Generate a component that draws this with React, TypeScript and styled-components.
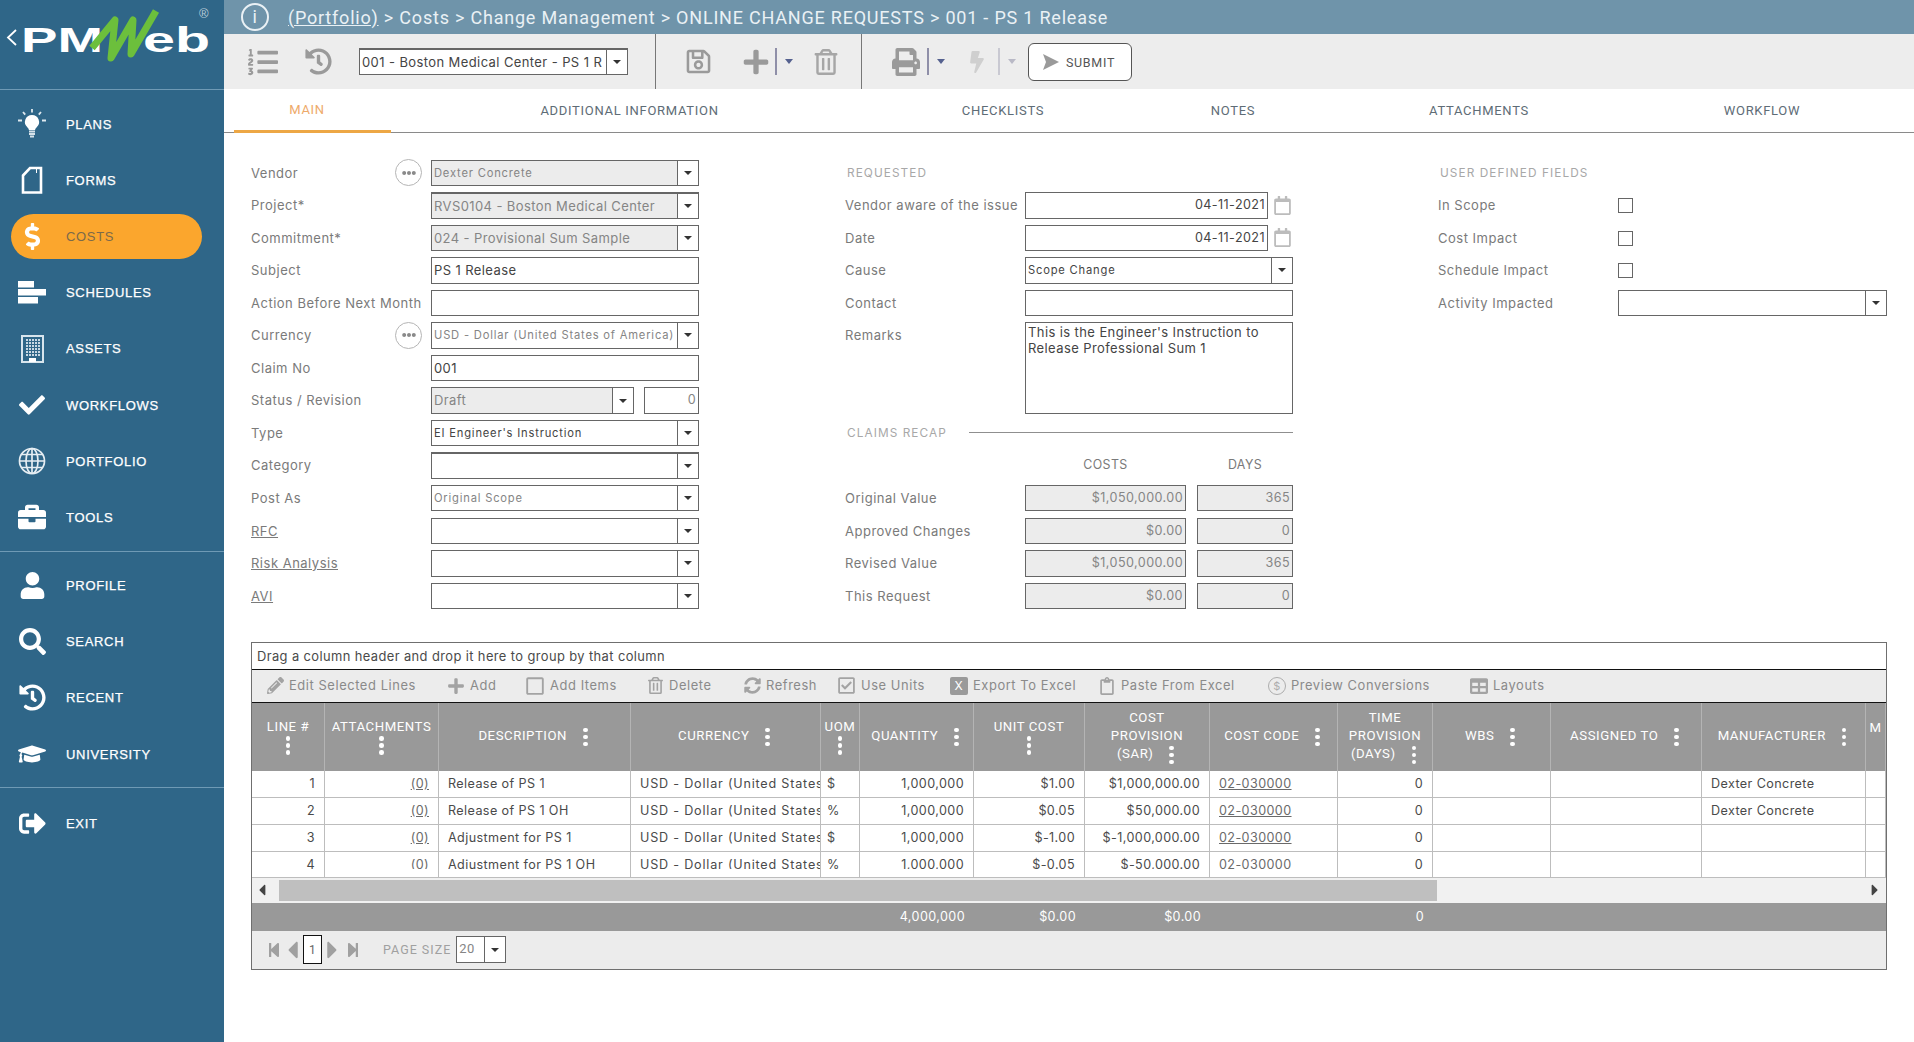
import React from "react";
import styled, {createGlobalStyle} from "styled-components";
import {
	FaBolt, FaBriefcase, FaCaretLeft, FaCaretRight, FaCheck, FaDollarSign, FaEllipsisH, FaGraduationCap, FaHistory,
	FaListOl, FaPencilAlt, FaPlus, FaPrint, FaRegCalendar, FaRegCheckSquare, FaRegClipboard, FaRegSave, FaRegSquare,
	FaRegTrashAlt, FaSearch, FaSignOutAlt, FaStepBackward, FaStepForward, FaSyncAlt, FaTable, FaUser
} from "react-icons/fa";

const GlobalStyle = createGlobalStyle`
	html, body {
		margin: 0;
		padding: 0;
		background: #ffffff;
	}
	* {
		box-sizing: border-box;
	}
`
const Page = styled.div`
	display: flex;
	width: 1914px;
	height: 1042px;
	overflow: hidden;
	font-family: "Inter", "Liberation Sans", sans-serif;
`

/* sidebar */
const Sidebar = styled.aside`
	flex: 0 0 224px;
	background: #2f6688;
	color: #ffffff;
	font-family: "Liberation Sans", sans-serif;
`
const LogoBox = styled.div`
	height: 90px;
	border-bottom: 1px solid #6f9ab5;
`
const NavGroup = styled.nav<{$last?: boolean}>`
	padding: ${props => props.$last ? 7 : 6}px 0 5px;
	border-bottom: ${props => props.$last ? "none" : "1px solid #6f9ab5"};
`
const NavItem = styled.div<{$active?: boolean}>`
	position: relative;
	display: flex;
	align-items: center;
	height: 56.2px;
	padding-left: 18px;
	font-size: 13px;
	letter-spacing: 0.68px;
	-webkit-text-stroke: 0.25px ${props => props.$active ? "transparent" : "#ffffff"};
	color: ${props => props.$active ? "#7b6a4a" : "#ffffff"};
	z-index: 0;

	&::before {
		content: "";
		display: ${props => props.$active ? "block" : "none"};
		position: absolute;
		left: 11px;
		top: 6px;
		width: 191px;
		height: 45px;
		border-radius: 23px;
		background: #fba62d;
		z-index: -1;
	}
`
const NavIcon = styled.span`
	display: flex;
	align-items: center;
	justify-content: center;
	width: 28px;
	height: 30px;
	margin-right: 20px;
	color: #ffffff;
	-webkit-text-stroke: 0;
`

const PlansIcon = () => (
	<svg width="28" height="30" viewBox="0 0 28 30">
		<path d="M14 6a7 7 0 0 1 4.5 12.4c-1 .9-1.3 1.8-1.4 2.6h-6.2c-.1-.8-.4-1.7-1.4-2.6A7 7 0 0 1 14 6z" fill="#fff"/>
		<path d="M11 22.5h6M11 25h6M12 27.5h4" stroke="#d6e2ea" strokeWidth="1.8"/>
		<path d="M14 0v3.5M5 3l2.2 2.6M23 3l-2.2 2.6M0 11.500h4M24 11.500h4" stroke="#dfe9ef" strokeWidth="1.8"/>
	</svg>
)
const FormsIcon = () => (
	<svg width="22" height="28" viewBox="0 0 22 28">
		<path d="M2 9.500 9 2h11v24.500H2z" fill="none" stroke="#fff" strokeWidth="2.600"/>
		<path d="M15.500 2v5" stroke="#fff" strokeWidth="1"/>
	</svg>
)
const SchedulesIcon = () => (
	<svg width="28" height="24" viewBox="0 0 28 24">
		<rect x="0" y="0" width="16" height="6.500" fill="#fff"/>
		<rect x="0" y="8" width="28" height="6.500" fill="#fff"/>
		<rect x="0" y="16" width="20" height="6.500" fill="#fff"/>
	</svg>
)
const AssetsIcon = () => {
	const windows = []
	for (let r = 0; r < 6; r++) {
		for (let c = 0; c < 5; c++) {
			windows.push(<rect key={`${r}-${c}`} x={5 + c * 3} y={4 + r * 3} width="2" height="2" fill="#c7d8e3"/>)
		}
	}
	return (
		<svg width="23" height="28" viewBox="0 0 23 28">
			<rect x="1" y="1" width="21" height="26" fill="#2f6688" stroke="#d8e5ed" strokeWidth="2"/>
			{windows}
			<rect x="8" y="23" width="7" height="4" fill="#fff"/>
		</svg>
	)
}
const GlobeIcon = () => (
	<svg width="28" height="28" viewBox="0 0 28 28" fill="none" stroke="#e6eef3" strokeWidth="1.700">
		<circle cx="14" cy="14" r="12.500"/>
		<ellipse cx="14" cy="14" rx="6" ry="12.500"/>
		<path d="M14 1.500v25M1.500 14h25M3.500 7.500h21M3.500 20.500h21"/>
	</svg>
)

const navTop = [
	{label: "PLANS", icon: <PlansIcon/>},
	{label: "FORMS", icon: <FormsIcon/>},
	{label: "COSTS", icon: <FaDollarSign size={27}/>, active: true},
	{label: "SCHEDULES", icon: <SchedulesIcon/>},
	{label: "ASSETS", icon: <AssetsIcon/>},
	{label: "WORKFLOWS", icon: <FaCheck size={26}/>},
	{label: "PORTFOLIO", icon: <GlobeIcon/>},
	{label: "TOOLS", icon: <FaBriefcase size={28}/>},
]
const navMiddle = [
	{label: "PROFILE", icon: <FaUser size={27}/>},
	{label: "SEARCH", icon: <FaSearch size={27}/>},
	{label: "RECENT", icon: <FaHistory size={27}/>},
	{label: "UNIVERSITY", icon: <FaGraduationCap size={28}/>},
]

const Logo = () => (
	<svg width="224" height="89" viewBox="0 0 224 89">
		<path d="M16 30 8 37.500l8 7.500" fill="none" stroke="#ffffff" strokeWidth="1.800"/>
		<text x="21" y="52" fontFamily="Liberation Sans" fontWeight="700" fontSize="35" fill="#ffffff" textLength="82" lengthAdjust="spacingAndGlyphs">PM</text>
		<text x="143" y="52" fontFamily="Liberation Sans" fontWeight="700" fontSize="35" fill="#ffffff" textLength="67" lengthAdjust="spacingAndGlyphs">eb</text>
		<path d="M92 48 115 20 111 58 133 20 131 54 156 11" fill="none" stroke="#6cbf3c" strokeWidth="7" strokeLinejoin="round"/>
		<text x="199" y="18" fontFamily="Liberation Sans" fontSize="13" fill="#b9ccd8">®</text>
	</svg>
)

/* top bars */
const Main = styled.main`
	flex: 1;
	min-width: 0;
	display: flex;
	flex-direction: column;
`
const Breadcrumb = styled.header`
	display: flex;
	align-items: center;
	height: 34px;
	padding-left: 17px;
	background: #6f94aa;
	color: #eaf1f5;
	font-family: "Roboto", sans-serif;
	font-size: 18px;
	letter-spacing: 0.79px;
	white-space: pre;
`
const InfoBadge = styled.span`
	display: flex;
	align-items: center;
	justify-content: center;
	width: 28px;
	height: 28px;
	margin-right: 19px;
	border: 2.5px solid #eaf1f5;
	border-radius: 50%;
	font-size: 18px;
	line-height: 1;
`
const CrumbLink = styled.span`
	text-decoration: underline;
`
const Toolbar = styled.div`
	display: flex;
	align-items: center;
	height: 55px;
	padding-left: 24px;
	background: #ededed;
`
const ToolIcon = styled.span<{$ml: number; $color?: string}>`
	display: flex;
	align-items: center;
	margin-left: ${props => props.$ml}px;
	color: ${props => props.$color || "#9a9a9a"};
`
const ToolSep = styled.span<{$ml: number}>`
	align-self: stretch;
	width: 1px;
	margin-left: ${props => props.$ml}px;
	background: #777777;
`
const ToolDivider = styled.span<{$ml: number; $faded?: boolean}>`
	width: 2px;
	height: 27px;
	margin-left: ${props => props.$ml}px;
	background: ${props => props.$faded ? "#c9c9d2" : "#8f8fa8"};
`
const SmallCaret = styled.span<{$ml: number; $faded?: boolean}>`
	width: 0;
	height: 0;
	margin-left: ${props => props.$ml}px;
	border-left: 4px solid transparent;
	border-right: 4px solid transparent;
	border-top: 5px solid ${props => props.$faded ? "#b9b9c6" : "#55618f"};
`
const SubmitButton = styled.button`
	display: flex;
	align-items: center;
	justify-content: center;
	gap: 6px;
	width: 104px;
	height: 38px;
	margin: 1px 0 0 12px;
	padding: 0 3px 0 0;
	background: #ffffff;
	border: 1px solid #555555;
	border-radius: 6px;
	color: #555555;
	font-family: "Roboto", sans-serif;
	font-size: 12.5px;
	letter-spacing: 0.7px;
`

/* tabs */
const TabBar = styled.div`
	display: flex;
	height: 44px;
	padding-left: 10px;
	border-bottom: 1px solid #8a8a8a;
`
const Tab = styled.div<{$w: number; $active?: boolean}>`
	flex: 0 0 ${props => props.$w}px;
	display: flex;
	align-items: center;
	justify-content: center;
	padding-right: ${props => props.$active ? 11 : 0}px;
	border-bottom: ${props => props.$active ? "3px solid #eda745" : "none"};
	height: ${props => props.$active ? 44 : 42}px;
	color: ${props => props.$active ? "#eeaa6a" : "#5e6c76"};
	font-family: "Roboto", sans-serif;
	font-size: 13px;
	letter-spacing: 0.7px;
`

/* form */
const FormArea = styled.section`
	display: grid;
	grid-template-columns: 594px 593px 1fr;
	padding: 26.5px 27px 0;
`
const FormColumn = styled.div`
	display: flex;
	flex-direction: column;
`
const Row = styled.div<{$span?: number}>`
	display: flex;
	align-items: flex-start;
	height: ${props => 32.55 * (props.$span || 1)}px;
	font-size: 13px;
	letter-spacing: 0.5px;
`
const Label = styled.div`
	flex: 0 0 180px;
	min-width: 0;
	display: flex;
	align-items: center;
	justify-content: space-between;
	height: 26px;
	padding-right: 9px;
	color: #7a7a7a;
	white-space: nowrap;
`
const LinkText = styled.span`
	text-decoration: underline;
`
const MoreButton = styled.span`
	display: flex;
	align-items: center;
	justify-content: center;
	width: 27px;
	height: 27px;
	border: 1.5px solid #b5b5b5;
	border-radius: 50%;
	color: #8a8a8a;
`
const SectionTitle = styled.div<{$rule?: boolean}>`
	display: flex;
	align-items: center;
	gap: 22px;
	width: ${props => props.$rule ? "448px" : "auto"};
	height: 26px;
	padding-left: 2px;
	color: #a8a8a8;
	font-size: 11.8px;
	letter-spacing: 1.08px;

	&::after {
		content: "";
		display: ${props => props.$rule ? "block" : "none"};
		flex: 1;
		height: 1px;
		background: #8f8f8f;
	}
`
const Box = styled.div<{$w?: number; $h?: number; $gray?: boolean; $thick?: boolean; $small?: boolean; $muted?: boolean}>`
	display: flex;
	align-items: stretch;
	flex: ${props => props.$w ? `0 0 ${props.$w}px` : "1"};
	height: ${props => props.$h || 26.5}px;
	overflow: hidden;
	border: 1px solid #666666;
	border-top-width: ${props => props.$thick ? 2 : 1}px;
	background: ${props => props.$gray ? "#ececec" : "#ffffff"};
	color: ${props => props.$muted || props.$gray ? "#858585" : "#444444"};
	font-size: ${props => props.$small ? 11.2 : 13}px;
	letter-spacing: ${props => props.$small ? 0.8 : 0.4}px;
	white-space: nowrap;
`
const BoxText = styled.span<{$right?: boolean}>`
	flex: 1;
	min-width: 0;
	overflow: hidden;
	padding: 0 2px;
	line-height: 24px;
	text-align: ${props => props.$right ? "right" : "left"};
	font-size: ${props => props.$right ? "12.6px" : "inherit"};
	letter-spacing: ${props => props.$right ? "0.42px" : "inherit"};
`
const Arrow = styled.span`
	flex: 0 0 21px;
	display: flex;
	align-items: center;
	justify-content: center;
	background: #ffffff;
	border-left: 1px solid #666666;

	&::after {
		content: "";
		width: 0;
		height: 0;
		border-left: 4px solid transparent;
		border-right: 4px solid transparent;
		border-top: 4px solid #333333;
	}
`
const RemarksText = styled.div`
	padding: 1px 2px;
	line-height: 16px;
	white-space: pre-line;
	color: #444444;
`
const CalendarSlot = styled.span`
	display: flex;
	align-items: center;
	height: 26px;
	margin-left: 5px;
	color: #bcbcbc;
`
const Spacer = styled.span<{$w: number}>`
	flex: 0 0 ${props => props.$w}px;
`
const RecapHead = styled.span<{$w: number; $ml?: number}>`
	flex: 0 0 ${props => props.$w}px;
	height: 26px;
	margin-left: ${props => props.$ml || 0}px;
	line-height: 26px;
	text-align: center;
	color: #7a7a7a;
	font-size: 12.4px;
	letter-spacing: 0.4px;
`
const CheckBox = styled.span`
	width: 15px;
	height: 15px;
	margin-top: 6px;
	border: 1px solid #666666;
`

const Select = (props: {value?: string; gray?: boolean; thick?: boolean; small?: boolean; muted?: boolean; w?: number}) => (
	<Box $gray={props.gray} $thick={props.thick} $small={props.small} $muted={props.muted} $w={props.w}>
		<BoxText>{props.value}</BoxText>
		<Arrow/>
	</Box>
)

/* grid */
const GridPanel = styled.section`
	width: 1636px;
	height: 328px;
	margin: 26.5px 0 0 27px;
	border: 1px solid #6f6f6f;
	font-size: 12.6px;
	letter-spacing: 0.4px;
	color: #4a4a4a;
`
const GroupBar = styled.div`
	height: 27px;
	padding-left: 5px;
	border-bottom: 1px solid #111111;
	line-height: 27px;
	font-size: 12.9px;
`
const GridTools = styled.div`
	display: flex;
	align-items: center;
	height: 33px;
	padding-left: 15px;
	background: #ececec;
	border-bottom: 1px solid #111111;
	color: #8a8a8a;
	font-size: 12.9px;
	letter-spacing: 0.58px;
`
const GridTool = styled.span<{$w: number}>`
	flex: 0 0 ${props => props.$w}px;
	display: flex;
	align-items: center;
	gap: 5px;
	white-space: nowrap;
	color: #8a8a8a;

	svg {
		color: #a3a3a3;
	}
`
const ExcelMark = styled.span`
	display: flex;
	align-items: center;
	justify-content: center;
	width: 18px;
	height: 18px;
	background: #9a9a9a;
	border-radius: 2px;
	color: #ffffff;
	font-size: 12px;
`
const CoinMark = styled.span`
	display: flex;
	align-items: center;
	justify-content: center;
	width: 18px;
	height: 18px;
	border: 1.5px solid #adadad;
	border-radius: 50%;
	color: #adadad;
	font-size: 11px;
`
const TableClip = styled.div`
	height: 175px;
	overflow: hidden;
	border-bottom: 1px solid #bdbdbd;
`
const Table = styled.table`
	width: 1634px;
	border-collapse: separate;
	border-spacing: 0;
	table-layout: fixed;
`
const HeadCell = styled.th`
	height: 68px;
	padding: 0 2px;
	background: #999999;
	border-right: 1px solid #b4b4b4;
	color: #ffffff;
	font-family: "Roboto", sans-serif;
	font-size: 13.2px;
	font-weight: 400;
	line-height: 18px;
	letter-spacing: 0.56px;
	text-align: center;
	vertical-align: middle;
	white-space: nowrap;
	overflow: hidden;
`
const Kebab = styled.span<{$stacked?: boolean}>`
	display: ${props => props.$stacked ? "flex" : "inline-flex"};
	flex-direction: column;
	align-items: center;
	gap: 2.5px;
	margin: ${props => props.$stacked ? "0" : "0 3px 0 16px"};
	vertical-align: middle;

	i {
		width: 4.5px;
		height: 4.5px;
		border-radius: 50%;
		background: #ffffff;
	}
`
const Cell = styled.td<{$right?: boolean}>`
	height: 27px;
	padding: 0 9px;
	overflow: hidden;
	border-right: 1px solid #bdbdbd;
	border-bottom: 1px solid #bdbdbd;
	text-align: ${props => props.$right ? "right" : "left"};
	white-space: nowrap;
`
const UomCell = styled(Cell)`
	padding: 0 0 0 6px;
`
const CurrencyCell = styled(Cell)`
	padding-right: 0;
	letter-spacing: 0.8px;
`
/* the last row runs under the scroll area, so its text is cut low down */
const CellBody = styled.div`
	height: 16px;
	line-height: 16px;
	overflow: hidden;

	tr:last-child & {
		height: 12.5px;
		margin-bottom: 3.5px;
	}
`
const CellLink = styled.span`
	text-decoration: underline;
	color: #6a6a6a;
`
const ScrollTrack = styled.div`
	display: flex;
	align-items: center;
	height: 25px;
	background: #f1f1f1;
	color: #444444;
`
const ScrollThumb = styled.div`
	width: 1158px;
	height: 21px;
	margin-left: 7px;
	background: #bfbfbf;
`
const ScrollArrow = styled.span<{$end?: boolean}>`
	display: flex;
	justify-content: center;
	width: 20px;
	margin-left: ${props => props.$end ? 428 : 0}px;
`
const FootCell = styled.td`
	height: 28px;
	padding: 0 9px;
	background: #999999;
	color: #ffffff;
	text-align: right;
	white-space: nowrap;
`
const Pager = styled.div`
	display: flex;
	align-items: center;
	height: 38px;
	padding-left: 14px;
	background: #ececec;
	color: #a0a0a0;
	font-family: "Roboto", sans-serif;
`
const PagerPrev = styled(FaCaretLeft)`
	width: 11px;
	height: 28px;
	margin-left: 5px;
`
const PagerNext = styled(FaCaretRight)`
	width: 11px;
	height: 28px;
	margin-left: 5px;
`
const PagerLast = styled(FaStepForward)`
	margin-left: 7px;
`
const PageNumber = styled.span`
	display: flex;
	align-items: center;
	justify-content: center;
	width: 19px;
	height: 29px;
	margin-left: 5px;
	background: #ffffff;
	border: 1px solid #111111;
	color: #666666;
	font-size: 12px;
`
const PageSizeLabel = styled.span`
	margin: 0 5px 0 22px;
	font-size: 12.5px;
	letter-spacing: 1px;
`

const columnWidths = [73, 114, 192, 190, 39, 114, 111, 125, 128, 95, 118, 151, 164, 20]
const Columns = () => (
	<colgroup>
		{columnWidths.map((w, i) => <col key={i} width={w}/>)}
	</colgroup>
)
const Dots = (props: {stacked?: boolean}) => (
	<Kebab $stacked={props.stacked}><i/><i/><i/></Kebab>
)

const rows = [
	["1", "Release of PS 1", "$", "$1.00", "$1,000,000.00", "Dexter Concrete"],
	["2", "Release of PS 1 OH", "%", "$0.05", "$50,000.00", "Dexter Concrete"],
	["3", "Adjustment for PS 1", "$", "$-1.00", "$-1,000,000.00", ""],
	["4", "Adjustment for PS 1 OH", "%", "$-0.05", "$-50,000.00", ""],
]

export default function App() {
	return (
		<Page>
			<GlobalStyle/>
			<Sidebar>
				<LogoBox><Logo/></LogoBox>
				<NavGroup>
					{navTop.map(item => (
						<NavItem key={item.label} $active={item.active}><NavIcon>{item.icon}</NavIcon>{item.label}</NavItem>
					))}
				</NavGroup>
				<NavGroup>
					{navMiddle.map(item => (
						<NavItem key={item.label}><NavIcon>{item.icon}</NavIcon>{item.label}</NavItem>
					))}
				</NavGroup>
				<NavGroup $last>
					<NavItem><NavIcon><FaSignOutAlt size={27}/></NavIcon>EXIT</NavItem>
				</NavGroup>
			</Sidebar>

			<Main>
				<Breadcrumb>
					<InfoBadge>i</InfoBadge>
					<CrumbLink>(Portfolio)</CrumbLink> &gt; Costs &gt; Change Management &gt; ONLINE CHANGE REQUESTS &gt; 001 - PS 1 Release
				</Breadcrumb>

				<Toolbar>
					<ToolIcon $ml={0}><FaListOl size={30}/></ToolIcon>
					<ToolIcon $ml={27}><FaHistory size={27}/></ToolIcon>
					<Spacer $w={27}/>
					<Select value="001 - Boston Medical Center - PS 1 R" w={269} thick/>
					<ToolSep $ml={27}/>
					<ToolIcon $ml={29}><FaRegSave size={27}/></ToolIcon>
					<ToolIcon $ml={30}><FaPlus size={28}/></ToolIcon>
					<ToolDivider $ml={5}/>
					<SmallCaret $ml={8}/>
					<ToolIcon $ml={20} $color="#a6a6a6"><FaRegTrashAlt size={26}/></ToolIcon>
					<ToolSep $ml={22}/>
					<ToolIcon $ml={30}><FaPrint size={28}/></ToolIcon>
					<ToolDivider $ml={7}/>
					<SmallCaret $ml={8}/>
					<ToolIcon $ml={21} $color="#cfcfcf"><FaBolt size={22}/></ToolIcon>
					<ToolDivider $ml={10} $faded/>
					<SmallCaret $ml={8} $faded/>
					<SubmitButton>
						<svg width="18" height="18" viewBox="0 0 18 18"><path d="M1 1 17 9 1 17 4 9z" fill="#9a9a9a"/></svg>
						SUBMIT
					</SubmitButton>
				</Toolbar>

				<TabBar>
					<Tab $w={157} $active>MAIN</Tab>
					<Tab $w={477}>ADDITIONAL INFORMATION</Tab>
					<Tab $w={270}>CHECKLISTS</Tab>
					<Tab $w={190}>NOTES</Tab>
					<Tab $w={302}>ATTACHMENTS</Tab>
					<Tab $w={264}>WORKFLOW</Tab>
				</TabBar>

				<FormArea>
					<FormColumn>
						<Row><Label>Vendor<MoreButton><FaEllipsisH size={14}/></MoreButton></Label><Select value="Dexter Concrete" gray small w={268}/></Row>
						<Row><Label>Project*</Label><Select value="RVS0104 - Boston Medical Center" gray thick w={268}/></Row>
						<Row><Label>Commitment*</Label><Select value="024 - Provisional Sum Sample" gray w={268}/></Row>
						<Row><Label>Subject</Label><Box $w={268}><BoxText>PS 1 Release</BoxText></Box></Row>
						<Row><Label>Action Before Next Month</Label><Box $w={268}/></Row>
						<Row><Label>Currency<MoreButton><FaEllipsisH size={14}/></MoreButton></Label><Select value="USD - Dollar (United States of America)" muted small w={268}/></Row>
						<Row><Label>Claim No</Label><Box $w={268}><BoxText>001</BoxText></Box></Row>
						<Row>
							<Label>Status / Revision</Label>
							<Select value="Draft" gray w={203}/>
							<Spacer $w={10}/>
							<Box $w={55} $muted><BoxText $right>0</BoxText></Box>
						</Row>
						<Row><Label>Type</Label><Select value="EI Engineer's Instruction" small w={268}/></Row>
						<Row><Label>Category</Label><Select thick w={268}/></Row>
						<Row><Label>Post As</Label><Select value="Original Scope" small muted w={268}/></Row>
						<Row><Label><LinkText>RFC</LinkText></Label><Select w={268}/></Row>
						<Row><Label><LinkText>Risk Analysis</LinkText></Label><Select w={268}/></Row>
						<Row><Label><LinkText>AVI</LinkText></Label><Select w={268}/></Row>
					</FormColumn>

					<FormColumn>
						<Row><SectionTitle>REQUESTED</SectionTitle></Row>
						<Row>
							<Label>Vendor aware of the issue</Label>
							<Box $w={243}><BoxText $right>04-11-2021</BoxText></Box>
							<CalendarSlot><FaRegCalendar size={19}/></CalendarSlot>
						</Row>
						<Row>
							<Label>Date</Label>
							<Box $w={243}><BoxText $right>04-11-2021</BoxText></Box>
							<CalendarSlot><FaRegCalendar size={19}/></CalendarSlot>
						</Row>
						<Row><Label>Cause</Label><Select value="Scope Change" small w={268}/></Row>
						<Row><Label>Contact</Label><Box $w={268}/></Row>
						<Row $span={3}>
							<Label>Remarks</Label>
							<Box $w={268} $h={92}>
								<RemarksText>{"This is the Engineer's Instruction to\nRelease Professional Sum 1"}</RemarksText>
							</Box>
						</Row>
						<Row><SectionTitle $rule>CLAIMS RECAP</SectionTitle></Row>
						<Row>
							<Spacer $w={180}/>
							<RecapHead $w={161}>COSTS</RecapHead>
							<RecapHead $w={96} $ml={11}>DAYS</RecapHead>
						</Row>
						{[
							["Original Value", "$1,050,000.00", "365"],
							["Approved Changes", "$0.00", "0"],
							["Revised Value", "$1,050,000.00", "365"],
							["This Request", "$0.00", "0"],
						].map(([label, cost, days]) => (
							<Row key={label}>
								<Label>{label}</Label>
								<Box $w={161} $gray><BoxText $right>{cost}</BoxText></Box>
								<Spacer $w={11}/>
								<Box $w={96} $gray><BoxText $right>{days}</BoxText></Box>
							</Row>
						))}
					</FormColumn>

					<FormColumn>
						<Row><SectionTitle>USER DEFINED FIELDS</SectionTitle></Row>
						<Row><Label>In Scope</Label><CheckBox/></Row>
						<Row><Label>Cost Impact</Label><CheckBox/></Row>
						<Row><Label>Schedule Impact</Label><CheckBox/></Row>
						<Row><Label>Activity Impacted</Label><Select w={269}/></Row>
					</FormColumn>
				</FormArea>

				<GridPanel>
					<GroupBar>Drag a column header and drop it here to group by that column</GroupBar>
					<GridTools>
						<GridTool $w={180}><FaPencilAlt size={17}/>Edit Selected Lines</GridTool>
						<GridTool $w={78}><FaPlus size={18}/>Add</GridTool>
						<GridTool $w={122}><FaRegSquare size={20}/>Add Items</GridTool>
						<GridTool $w={97}><FaRegTrashAlt size={17}/>Delete</GridTool>
						<GridTool $w={93}><FaSyncAlt size={17}/>Refresh</GridTool>
						<GridTool $w={113}><FaRegCheckSquare size={19}/>Use Units</GridTool>
						<GridTool $w={148}><ExcelMark>X</ExcelMark>Export To Excel</GridTool>
						<GridTool $w={170}><FaRegClipboard size={18}/>Paste From Excel</GridTool>
						<GridTool $w={202}><CoinMark>$</CoinMark>Preview Conversions</GridTool>
						<GridTool $w={80}><FaTable size={18}/>Layouts</GridTool>
					</GridTools>

					<TableClip>
						<Table>
							<Columns/>
							<thead>
								<tr>
									<HeadCell>LINE #<Dots stacked/></HeadCell>
									<HeadCell>ATTACHMENTS<Dots stacked/></HeadCell>
									<HeadCell>DESCRIPTION<Dots/></HeadCell>
									<HeadCell>CURRENCY<Dots/></HeadCell>
									<HeadCell>UOM<Dots stacked/></HeadCell>
									<HeadCell>QUANTITY<Dots/></HeadCell>
									<HeadCell>UNIT COST<Dots stacked/></HeadCell>
									<HeadCell>COST<br/>PROVISION<br/>(SAR)<Dots/></HeadCell>
									<HeadCell>COST CODE<Dots/></HeadCell>
									<HeadCell>TIME<br/>PROVISION<br/>(DAYS)<Dots/></HeadCell>
									<HeadCell>WBS<Dots/></HeadCell>
									<HeadCell>ASSIGNED TO<Dots/></HeadCell>
									<HeadCell>MANUFACTURER<Dots/></HeadCell>
									<HeadCell>M<br/>&nbsp;</HeadCell>
								</tr>
							</thead>
							<tbody>
								{rows.map(row => (
									<tr key={row[0]}>
										<Cell $right><CellBody>{row[0]}</CellBody></Cell>
										<Cell $right><CellBody><CellLink>(0)</CellLink></CellBody></Cell>
										<Cell><CellBody>{row[1]}</CellBody></Cell>
										<CurrencyCell><CellBody>USD - Dollar (United States</CellBody></CurrencyCell>
										<UomCell><CellBody>{row[2]}</CellBody></UomCell>
										<Cell $right><CellBody>1,000,000</CellBody></Cell>
										<Cell $right><CellBody>{row[3]}</CellBody></Cell>
										<Cell $right><CellBody>{row[4]}</CellBody></Cell>
										<Cell><CellBody><CellLink>02-030000</CellLink></CellBody></Cell>
										<Cell $right><CellBody>0</CellBody></Cell>
										<Cell/>
										<Cell/>
										<Cell><CellBody>{row[5]}</CellBody></Cell>
										<Cell/>
									</tr>
								))}
							</tbody>
						</Table>
					</TableClip>

					<ScrollTrack>
						<ScrollArrow><FaCaretLeft size={18}/></ScrollArrow>
						<ScrollThumb/>
						<ScrollArrow $end><FaCaretRight size={18}/></ScrollArrow>
					</ScrollTrack>

					<Table>
						<Columns/>
						<tbody>
							<tr>
								<FootCell colSpan={6}>4,000,000</FootCell>
								<FootCell>$0.00</FootCell>
								<FootCell>$0.00</FootCell>
								<FootCell/>
								<FootCell>0</FootCell>
								<FootCell colSpan={4}/>
							</tr>
						</tbody>
					</Table>

					<Pager>
						<FaStepBackward size={16}/>
						<PagerPrev/>
						<PageNumber>1</PageNumber>
						<PagerNext/>
						<PagerLast size={16}/>
						<PageSizeLabel>PAGE SIZE</PageSizeLabel>
						<Select value="20" muted w={50}/>
					</Pager>
				</GridPanel>
			</Main>
		</Page>
	)
}
